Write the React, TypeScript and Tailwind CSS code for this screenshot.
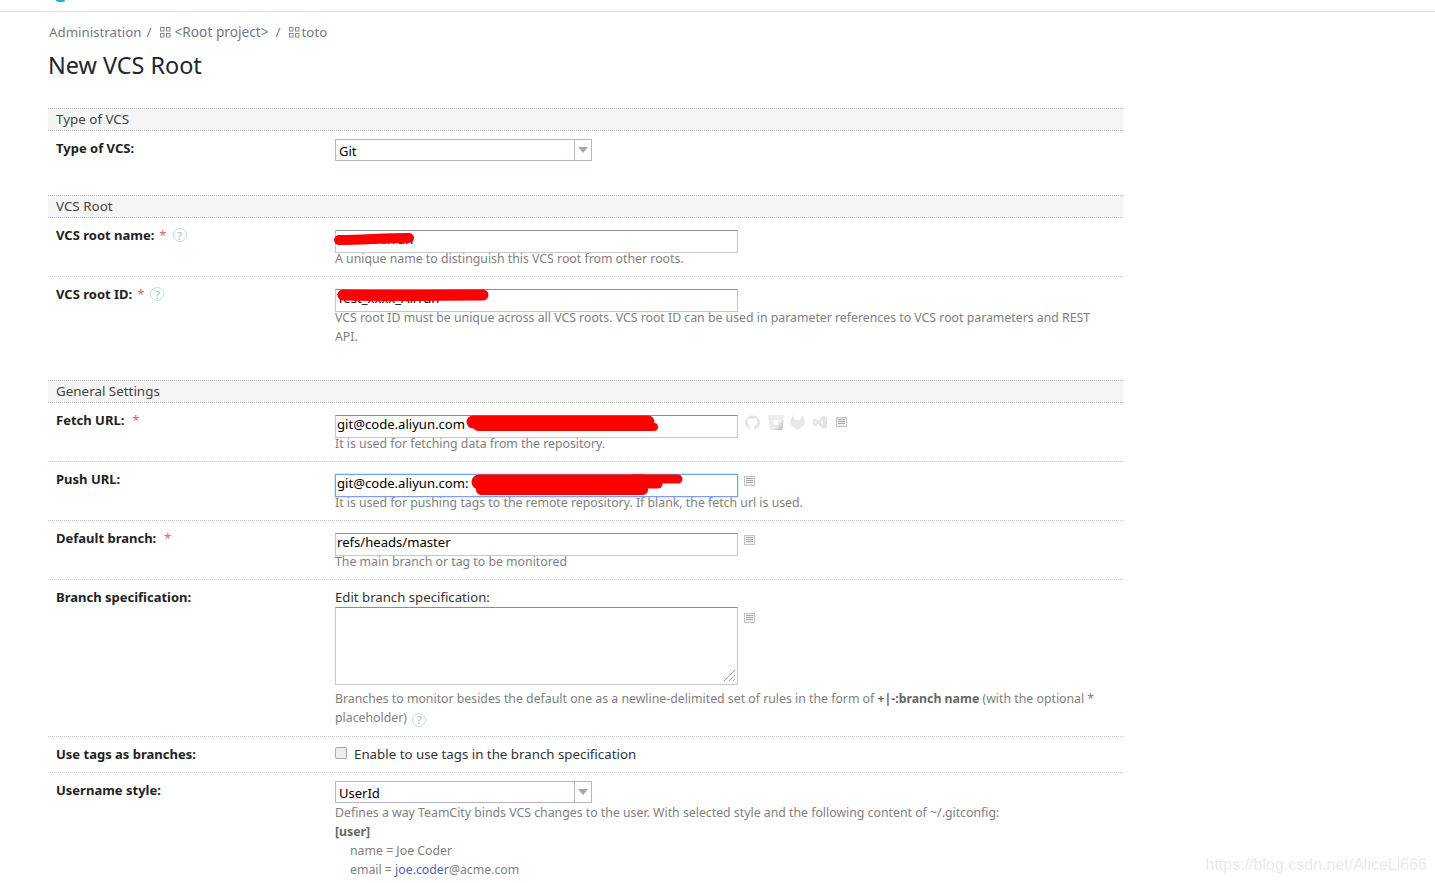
import type { ReactNode } from "react";
import { SiGithub, SiGitlab } from "react-icons/si";

const FONT = "font-['Noto_Sans','Open_Sans',sans-serif]";

function ProjectIcon() {
  return (
    <svg width="11" height="11" viewBox="0 0 11 11" className="fill-none stroke-[#8a8a8a]">
      <rect x="0.5" y="0.5" width="3.5" height="3.5" />
      <rect x="6.5" y="0.5" width="3.5" height="3.5" />
      <rect x="0.5" y="6.5" width="3.5" height="3.5" />
      <rect x="6.5" y="6.5" width="3.5" height="3.5" />
    </svg>
  );
}

function HelpIcon() {
  return (
    <span className="inline-flex h-[14px] w-[14px] items-center justify-center rounded-full border-[1.5px] border-[#c4dcee] text-[11px] font-medium leading-none text-[#9dc3e0]">
      ?
    </span>
  );
}

function ListIcon() {
  return (
    <svg width="11" height="10" viewBox="0 0 11 10" className="shrink-0">
      <rect x="0.5" y="0.5" width="10" height="9" fill="#f0f0f0" stroke="#c4c4c4" />
      <path d="M2 2.5h7M2 4.5h7M2 6.5h7" stroke="#a8a8a8" />
    </svg>
  );
}

// red marker strokes painted over the redacted values
function Scribble({ strokes }: { strokes: { d: string; w: number }[] }) {
  return (
    <svg
      width="420"
      height="30"
      viewBox="0 0 420 30"
      className="absolute left-[-2px] top-0 fill-none stroke-[#ff0000] [stroke-linecap:round] [stroke-linejoin:round]"
    >
      {strokes.map((s) => (
        <path key={s.d} d={s.d} strokeWidth={s.w} />
      ))}
    </svg>
  );
}

function Section({ title }: { title: string }) {
  return (
    <div className="h-[23px] border-y border-dotted border-[#bdbdbd] bg-[#f5f5f5] pl-2 text-[13.4px] leading-[20px] text-[#444]">
      {title}
    </div>
  );
}

function Row({
  label,
  required,
  help,
  gap,
  last,
  h,
  children,
}: {
  label: string;
  required?: boolean;
  help?: boolean;
  gap?: boolean;
  last?: boolean;
  h: string;
  children: ReactNode;
}) {
  return (
    <div className={`flex ${h} ${last ? "" : "border-b border-dotted border-[#c4c4c4]"}`}>
      <div className="mt-[7px] flex h-[20px] w-[287px] shrink-0 items-center pl-2 text-[13px] font-bold leading-[20px] text-[#222]">
        {label}
        {required && (
          <span className={`font-normal text-[#e06060] ${gap ? "ml-[8px]" : "ml-[5px]"}`}>*</span>
        )}
        {help && (
          <span className="ml-[6px] flex">
            <HelpIcon />
          </span>
        )}
      </div>
      <div className="min-w-0 flex-1 pt-[7px]">{children}</div>
    </div>
  );
}

function TextField({
  value,
  focused,
  children,
}: {
  value: string;
  focused?: boolean;
  children?: ReactNode;
}) {
  return (
    <div className="relative mt-[1px] h-[23px] w-[403px] shrink-0">
      <input
        readOnly
        value={value}
        className={`h-[23px] w-full border px-[1px] pb-[4px] text-[13.1px] leading-[19px] text-black outline-none ${
          focused
            ? "border-[#7aa0e6] shadow-[0_0_2px_#9db9ec]"
            : "border-[#c8c8c8] border-t-[#8c8c8c]"
        }`}
      />
      {children}
    </div>
  );
}

function Note({ children }: { children: ReactNode }) {
  return <div className="text-[12.3px] leading-[19px] text-[#808080]">{children}</div>;
}

function Select({ value }: { value: string }) {
  return (
    <div className="mt-[1px] flex h-[22px] w-[257px] border border-[#b4b4cc] text-[13px] leading-[22px] text-black">
      <div className="flex-1 pl-[3px]">{value}</div>
      <div className="flex w-[17px] items-center justify-center border-l border-[#b4b4cc]">
        <div className="h-0 w-0 border-x-[5px] border-t-[6px] border-x-transparent border-t-[#a8a8a8]" />
      </div>
    </div>
  );
}

function BitbucketIcon() {
  return (
    <svg width="16" height="15" viewBox="0 0 16 15">
      <defs>
        <linearGradient id="bb" x1="0" y1="0" x2="1" y2="1">
          <stop offset="0.4" stopColor="#ececec" />
          <stop offset="1" stopColor="#a9a9a9" />
        </linearGradient>
      </defs>
      <path d="M0 0h16l-2 15H2z" fill="#ececec" />
      <path d="M10.5 5H16l-2 10H6.500l-.5-4h3z" fill="url(#bb)" />
      <path d="M5 5h5.500l-1 5h-3.500z" fill="#fff" />
    </svg>
  );
}

function VisualStudioIcon() {
  return (
    <svg width="14" height="13" viewBox="0 0 14 13" className="fill-[#e4e4e4]">
      <path d="M10 0l4 1.500v10L10 13 5 8l-3 2.500L0 9.500v-6L2 2.500l3 2.500zM2 5v3l1.500-1.500zm8-1L7.500 6.500 10 9z" fillRule="evenodd" />
    </svg>
  );
}

export default function App() {
  return (
    <div className={`relative h-[883px] overflow-hidden bg-white ${FONT}`}>
      <div className="h-3 border-b border-[#e1e1e8]">
        <div className="ml-[56px] h-[2px] w-[9px] rounded-b-full bg-[#19b5d8]" />
      </div>

      <div className="ml-12 w-[1075px]">
        <div className="mt-[10px] flex h-[20px] items-center pl-[1px] text-[13.3px] leading-[20px] text-[#737980]">
          <span>Administration</span>
          <span className="ml-[5px] mr-[7px]">/</span>
          <span className="ml-[1px] mr-[4px] flex">
            <ProjectIcon />
          </span>
          <span className="text-[13.7px]">&lt;Root project&gt;</span>
          <span className="ml-[7px] mr-[7px]">/</span>
          <span className="ml-[1px] mr-[2px] flex">
            <ProjectIcon />
          </span>
          <span>toto</span>
        </div>
        <h1 className="mt-[8px] h-[48px] text-[23.4px] font-normal leading-[30px] text-[#1b2633]">
          New VCS Root
        </h1>

        <div className="mt-[10px]">
          <Section title="Type of VCS" />
          <Row label="Type of VCS:" h="h-[64px]" last>
            <Select value="Git" />
          </Row>

          <Section title="VCS Root" />
          <Row label="VCS root name:" required help h="h-[59px]">
            <TextField value="Fxxxx AliYun">
              <Scribble strokes={[{ d: "M6 14C30 14 50 12 76 12", w: 10 }]} />
            </TextField>
            <Note>A unique name to distinguish this VCS root from other roots.</Note>
          </Row>
          <Row label="VCS root ID:" required help h="h-[81px]" last>
            <TextField value="Test_xxxx_AliYun">
              <Scribble strokes={[{ d: "M10 10C60 11 110 10 150 10", w: 11 }]} />
            </TextField>
            <div className="w-[770px]">
              <Note>
                VCS root ID must be unique across all VCS roots. VCS root ID can be used in parameter
                references to VCS root parameters and REST API.
              </Note>
            </div>
          </Row>
          <div className="h-[22px]" />

          <Section title="General Settings" />
          <Row label="Fetch URL:" required gap h="h-[59px]">
            <div className="flex items-center">
              <TextField value="git@code.aliyun.com">
                <Scribble
                  strokes={[
                    { d: "M140 11H315", w: 13 },
                    { d: "M145 15H300", w: 10 },
                    { d: "M300 16H321", w: 8 },
                  ]}
                />
              </TextField>
              <div className="ml-[7px] flex items-center">
                <SiGithub className="h-[15px] w-[15px] text-[#e6e6e6]" />
                <span className="ml-[8px] flex">
                  <BitbucketIcon />
                </span>
                <SiGitlab className="ml-[6px] h-[15px] w-[15px] text-[#e8e8e8]" />
                <span className="ml-[8px] flex">
                  <VisualStudioIcon />
                </span>
                <span className="ml-[9px] flex">
                  <ListIcon />
                </span>
              </div>
            </div>
            <Note>It is used for fetching data from the repository.</Note>
          </Row>
          <Row label="Push URL:" h="h-[59px]">
            <div className="flex items-center">
              <TextField value="git@code.aliyun.com:" focused>
                <Scribble
                  strokes={[
                    { d: "M146 12H310", w: 15 },
                    { d: "M148 20H310", w: 10 },
                    { d: "M300 9H345", w: 9 },
                    { d: "M300 14H325", w: 9 },
                  ]}
                />
              </TextField>
              <span className="ml-[6px] flex">
                <ListIcon />
              </span>
            </div>
            <Note>It is used for pushing tags to the remote repository. If blank, the fetch url is used.</Note>
          </Row>
          <Row label="Default branch:" required gap h="h-[59px]">
            <div className="flex items-center">
              <TextField value="refs/heads/master" />
              <span className="ml-[6px] flex">
                <ListIcon />
              </span>
            </div>
            <Note>The main branch or tag to be monitored</Note>
          </Row>
          <Row label="Branch specification:" h="h-[157px]">
            <div className="text-[13.2px] leading-[20px] text-[#333]">Edit branch specification:</div>
            <div className="flex items-start">
              <div className="relative h-[78px] w-[403px]">
                <textarea
                  readOnly
                  className="h-[78px] w-[403px] resize-none border border-[#c8c8c8] border-t-[#8c8c8c] outline-none"
                />
                <svg width="13" height="13" viewBox="0 0 13 13" className="absolute bottom-[3px] right-[2px] stroke-[#a0a0a0]">
                  <path d="M1 12L12 1M6 12l6-6M10 12l2-2" />
                </svg>
              </div>
              <span className="ml-[6px] mt-[6px] flex">
                <ListIcon />
              </span>
            </div>
            <div className="mt-[4px] w-[770px]">
              <Note>
                Branches to monitor besides the default one as a newline-delimited set of rules in the form of{" "}
                <b className="text-[#666]">+|-:branch name</b> (with the optional *
                <br />
                placeholder){" "}
                <span className="ml-[2px] inline-flex align-[-2px]">
                  <HelpIcon />
                </span>
              </Note>
            </div>
          </Row>
          <Row label="Use tags as branches:" h="h-[36px]">
            <div className="flex items-center">
              <div className="mb-[3px] h-[12px] w-[12px] rounded-[2px] border border-[#aaa] bg-[#eee]" />
              <span className="ml-[7px] text-[13.3px] leading-[20px] text-[#333]">
                Enable to use tags in the branch specification
              </span>
            </div>
          </Row>
          <Row label="Username style:" h="h-[111px]" last>
            <Select value="UserId" />
            <Note>Defines a way TeamCity binds VCS changes to the user. With selected style and the following content of ~/.gitconfig:</Note>
            <Note>
              <b className="text-[#666]">[user]</b>
            </Note>
            <Note>
              <span className="pl-[15px]">name = Joe Coder</span>
            </Note>
            <Note>
              <span className="pl-[15px]">email = </span>
              <span className="text-[#4c5fb8]">joe.coder</span>@acme.com
            </Note>
          </Row>
        </div>
      </div>

      <div className="absolute bottom-[8px] right-[8px] font-['Liberation_Sans',sans-serif] text-[16px] leading-[20px] text-[#e9e9e9] blur-[0.4px]">
        https://blog.csdn.net/AliceLi666
      </div>
    </div>
  );
}
